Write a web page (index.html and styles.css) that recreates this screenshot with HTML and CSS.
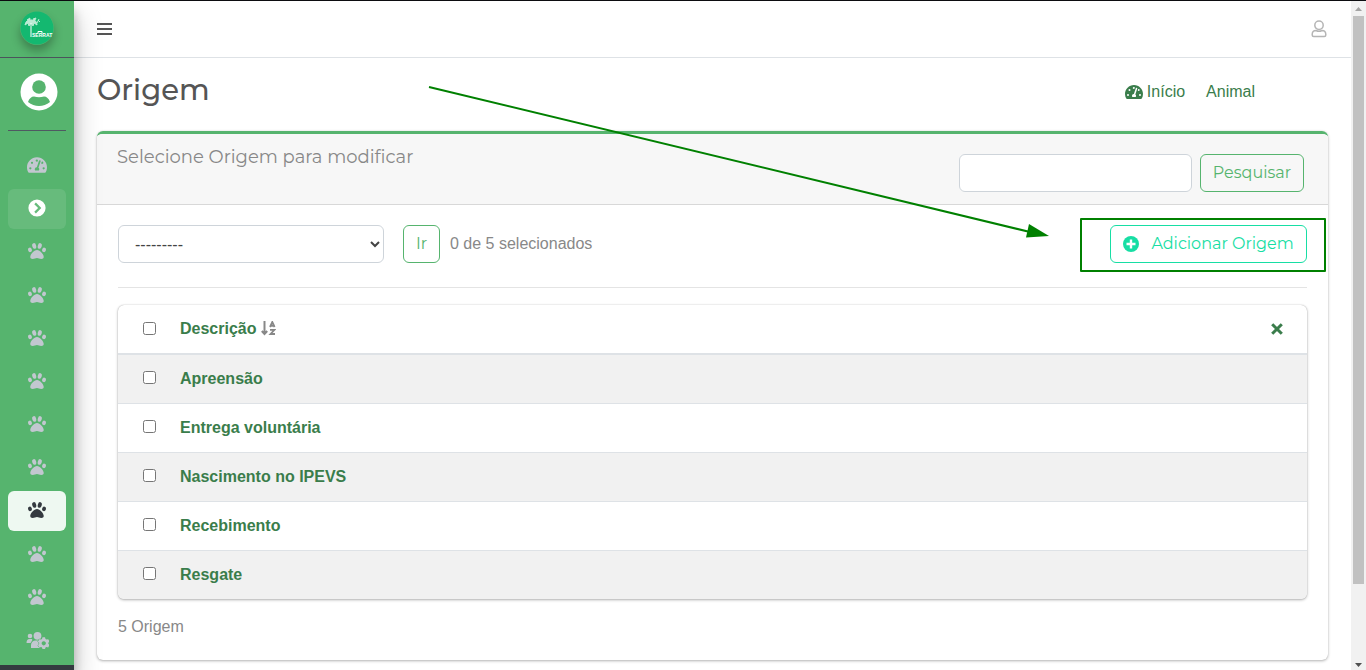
FILE: index.html
```html
<!DOCTYPE html>
<html lang="pt-br">
<head>
<meta charset="utf-8">
<title>Origem</title>
<link rel="stylesheet" href="styles.css">
</head>
<body>
<svg class="defs" aria-hidden="true">
  <symbol id="paw" viewBox="0 0 512 512">
    <path d="M256 224c-79.4 0-192 122.8-192 200.3 0 34.9 26.8 55.7 71.7 55.7 48.9 0 81.1-25 120.3-25 39.500 0 71.800 25 120.300 25 44.900 0 71.700-20.800 71.700-55.700C448 346.800 335.400 224 256 224z"/>
    <ellipse cx="56" cy="224" rx="53" ry="65" transform="rotate(-16 56 224)"/>
    <ellipse cx="456" cy="224" rx="53" ry="65" transform="rotate(16 456 224)"/>
    <ellipse cx="177" cy="112" rx="56" ry="82" transform="rotate(-15 177 112)"/>
    <ellipse cx="335" cy="112" rx="56" ry="82" transform="rotate(15 335 112)"/>
  </symbol>
  <symbol id="gauge" viewBox="0 0 576 512">
    <path fill-rule="evenodd" d="M288 32C129 32 0 161 0 320c0 53 14 102 39 145 6 9 16 15 27 15h444c11 0 21-6 27-15 25-43 39-92 39-145C576 161 447 32 288 32zM288 96a32 32 0 0 1 29 20l-9 29a32 32 0 1 1-20-49zM96 384a32 32 0 1 1 0-64 32 32 0 0 1 0 64zM144 224a32 32 0 1 1 0-64 32 32 0 0 1 0 64zM391 152l-61 184c30 20 30 55 13 80H233c-23-39-3-96 51-96l61-183c10-30 56-16 46 15zM408 202l16-39a32 32 0 1 1-16 39zM480 384a32 32 0 1 1 0-64 32 32 0 0 1 0 64z"/>
  </symbol>
</svg>
<div class="app">
  <aside class="sidebar">
    <a class="brand" href="#" aria-label="Início">
      <svg class="logo" viewBox="0 0 34 34" aria-hidden="true">
        <circle class="logo-disc" cx="17" cy="17" r="16.500"/>
        <path class="logo-art" d="M5 14Q6 8 12 9Q17 9 17 14L14 12L13 15L11 12L9 15L8 12ZM7 9L10 7L9 10M13 8L16 7L14 11M18 9L20 11M19 8L17 12"/>
        <path class="logo-line" d="M11 12V26M18 22V20.500H22V22"/>
        <text class="logo-text" x="12" y="26">SERRAT</text>
      </svg>
    </a>
    <div class="user-panel">
      <a href="#" aria-label="Usuário">
        <svg class="avatar" viewBox="0 0 38 38" aria-hidden="true"><circle class="av-bg" cx="19" cy="19" r="18.500"/><circle class="av-fg" cx="19" cy="14" r="6.800"/><path class="av-fg" d="M8 29Q10 23.500 14 23.500Q19 25 24 23.500Q28 23.500 30 29Q25 33 19 33T8 29Z"/></svg>
      </a>
    </div>
    <nav class="side-nav" aria-label="Menu lateral">
      <a class="side-link" href="#" aria-label="Painel"><svg class="gauge"><use href="#gauge"/></svg></a>
      <a class="side-link open" href="#" aria-label="Animal"><svg class="paw" viewBox="0 0 18 18"><path fill-rule="evenodd" d="M9 .4a8.600 8.600 0 1 0 0 17.200A8.600 8.600 0 1 0 9 .4zM6.300 5.200L7.900 3.600L13.300 9L7.900 14.400L6.300 12.800L10.100 9z"/></svg></a>
      <a class="side-link" href="#" aria-label="Item 1"><svg class="paw"><use href="#paw"/></svg></a>
      <a class="side-link" href="#" aria-label="Item 2"><svg class="paw"><use href="#paw"/></svg></a>
      <a class="side-link" href="#" aria-label="Item 3"><svg class="paw"><use href="#paw"/></svg></a>
      <a class="side-link" href="#" aria-label="Item 4"><svg class="paw"><use href="#paw"/></svg></a>
      <a class="side-link" href="#" aria-label="Item 5"><svg class="paw"><use href="#paw"/></svg></a>
      <a class="side-link" href="#" aria-label="Item 6"><svg class="paw"><use href="#paw"/></svg></a>
      <a class="side-link active" href="#" aria-label="Origem" aria-current="page"><svg class="paw"><use href="#paw"/></svg></a>
      <a class="side-link" href="#" aria-label="Item 7"><svg class="paw"><use href="#paw"/></svg></a>
      <a class="side-link" href="#" aria-label="Item 8"><svg class="paw"><use href="#paw"/></svg></a>
      <a class="side-link" href="#" aria-label="Autenticação"><svg class="users" viewBox="0 0 22 18"><circle cx="3.500" cy="5" r="2.300"/><circle cx="11" cy="4.800" r="3.900"/><path d="M0 12Q0 8 3 8H5.500Q6.500 8.500 5 10.500L4 12ZM4.500 17V14Q5 9.500 9 9.500H13Q11.500 12 12.500 14.500L14 17Z"/><path class="cog" fill-rule="evenodd" d="M16 6.300h2.500l.5 1.700 1 .6 1.700-.4 1.300 2.300-1.200 1.300v1l1.200 1.300-1.300 2.300-1.700-.4-1 .6-.5 1.500H16l-.5-1.500-1-.6-1.700.4-1.300-2.300 1.200-1.300v-1l-1.200-1.300 1.300-2.300 1.700.4 1-.6zM17.200 10.200a2.100 2.100 0 1 0 .1 0z"/></svg></a>
    </nav>
  </aside>

  <div class="page">
    <header class="topbar">
      <button class="icon-btn" type="button" aria-label="Alternar menu"><svg class="bars" viewBox="0 0 15 14"><path d="M0 2H15M0 7H15M0 12H15"/></svg></button>
      <button class="icon-btn" type="button" aria-label="Conta"><svg class="person" viewBox="0 0 16 18"><circle cx="8" cy="5.200" r="4.200"/><path d="M5 10.500Q8 12 11 10.500Q14.800 10.500 14.800 14.500V15Q14.800 16.500 13.300 16.500H2.700Q1.200 16.500 1.200 15V14.500Q1.200 10.500 5 10.500Z"/></svg></button>
    </header>
    <main class="content">
      <div class="heading">
        <h1>Origem</h1>
        <nav class="crumbs" aria-label="Trilha">
          <a href="#"><svg class="crumb-icon"><use href="#gauge"/></svg>Início</a>
          <a href="#">Animal</a>
        </nav>
      </div>
      <section class="card">
        <div class="card-head">
          <h2>Selecione Origem para modificar</h2>
          <form class="search">
            <input class="field" type="text" aria-label="Pesquisar">
            <button class="btn" type="button">Pesquisar</button>
          </form>
        </div>
        <div class="card-body">
          <div class="actions">
            <select class="field action-select" aria-label="Ação"><option>---------</option></select>
            <button class="btn go" type="button">Ir</button>
            <span>0 de 5 selecionados</span>
            <a class="btn add" href="#"><svg class="plus" viewBox="0 0 16 16"><circle cx="8" cy="8" r="8"/><path d="M8 3.500V12.500M3.500 8H12.500"/></svg>Adicionar Origem</a>
          </div>
          <div class="table-wrap">
            <table>
              <thead>
                <tr>
                  <th class="check"><input type="checkbox" aria-label="Selecionar todos"></th>
                  <th><a href="#">Descrição</a> <svg class="sort" viewBox="0 0 15 15"><path d="M3.500 0V12M.8 10L3.500 13L6.200 10"/><path class="az" d="M9 6L11.300 1L13.600 6M9.800 4.800H12.800M9 8.800H13.500L9.500 13H14"/></svg></th>
                  <th class="clear"><a href="#" aria-label="Remover ordenação"><svg class="times" viewBox="0 0 12 12"><path d="M1.200 1.200L10.800 10.800M10.800 1.200L1.200 10.800"/></svg></a></th>
                </tr>
              </thead>
              <tbody>
                <tr><td class="check"><input type="checkbox" aria-label="Apreensão"></td><th colspan="2"><a href="#">Apreensão</a></th></tr>
                <tr><td class="check"><input type="checkbox" aria-label="Entrega voluntária"></td><th colspan="2"><a href="#">Entrega voluntária</a></th></tr>
                <tr><td class="check"><input type="checkbox" aria-label="Nascimento no IPEVS"></td><th colspan="2"><a href="#">Nascimento no IPEVS</a></th></tr>
                <tr><td class="check"><input type="checkbox" aria-label="Recebimento"></td><th colspan="2"><a href="#">Recebimento</a></th></tr>
                <tr><td class="check"><input type="checkbox" aria-label="Resgate"></td><th colspan="2"><a href="#">Resgate</a></th></tr>
              </tbody>
            </table>
          </div>
          <p class="total">5 Origem</p>
        </div>
      </section>
    </main>
  </div>

  <div class="scrollbar" aria-hidden="true">
    <svg class="tri" viewBox="0 0 7 4"><path d="M0 4L3.500 0L7 4Z"/></svg>
    <div class="track"><div class="thumb"></div></div>
    <svg class="tri down" viewBox="0 0 7 4"><path d="M0 0L3.500 4L7 0Z"/></svg>
  </div>
</div>
<svg class="arrow" viewBox="0 0 622 152" aria-hidden="true"><path class="shaft" d="M1 1L602 146"/><path d="M621 150L598 151.500L601 138Z"/></svg>
<div class="highlight"></div>
</body>
</html>
```
FILE: styles.css
```css
* { box-sizing: border-box; }
body {
  margin: 0;
  color: #888;
  background: #fff;
  font: 16px/24px "Liberation Sans", Arial, sans-serif;
  overflow: hidden;
}
a { color: #3a7d4b; text-decoration: none; }
button { font: inherit; cursor: pointer; }
svg { fill: currentColor; flex: none; }
.defs { position: absolute; width: 0; height: 0; }
.app { display: flex; height: 100vh; border-top: 1px solid #0c0c10; }

.sidebar {
  display: flex;
  flex-direction: column;
  flex: none;
  width: 74px;
  background: #56b46e;
  border-bottom: 5px solid #343a40;
  box-shadow: 0 14px 28px rgba(0,0,0,.25), 0 10px 10px rgba(0,0,0,.22);
  z-index: 1;
}
.brand {
  display: flex;
  justify-content: center;
  height: 57px;
  padding-top: 10px;
  border-bottom: 1px solid #4b545c;
}
.logo { width: 34px; height: 34px; overflow: visible; border-radius: 50%; box-shadow: 0 6px 10px rgba(0,0,0,.28); }
.logo-disc { fill: #14b870; }
.logo-art { fill: #e6f8ee; stroke: #e6f8ee; stroke-width: 1; opacity: .8; }
.logo-line { fill: none; stroke: #fff; stroke-width: 1; }
.logo-text { fill: #fff; font: bold 5px "Liberation Sans", sans-serif; }
.user-panel { margin: 0 8px 15px; padding: 15px 0 19px; border-bottom: 1px solid #4f5962; }
.user-panel a { display: flex; justify-content: center; padding-left: 4px; }
.avatar { width: 38px; height: 38px; }
.av-bg { fill: #fff; }
.av-fg { fill: #56b46e; }
.side-nav { display: flex; flex: 1; flex-direction: column; justify-content: space-between; padding: 0 8px 4px; }
.side-link {
  display: flex;
  align-items: center;
  justify-content: center;
  height: 40px;
  padding-bottom: 2px;
  color: #c2c7d0;
  border-radius: 6px;
}
.side-link.open { color: #fff; background: rgba(255,255,255,.1); }
.side-link.active { color: #343a40; background: rgba(255,255,255,.9); }
.paw { width: 18px; height: 18px; }
.gauge { width: 20px; height: 18px; }
.users { width: 23px; height: 18px; }
.cog { stroke: #56b46e; stroke-width: 1; paint-order: stroke; }

.page { flex: 1; min-width: 0; }
.topbar {
  display: flex;
  align-items: center;
  justify-content: space-between;
  height: 57px;
  padding: 0 24px 0 23px;
  border-bottom: 1px solid #dee2e6;
}
.icon-btn { display: flex; padding: 0; border: 0; background: none; color: #555; }
.bars { width: 15px; height: 14px; padding-bottom: 0; stroke: #555; stroke-width: 2; }
.person { width: 16px; height: 18px; fill: none; stroke: #b5b5b5; stroke-width: 1.500; }
.content { padding: 15px 23px 0; }
.heading { display: flex; justify-content: space-between; height: 58px; padding-right: 73px; }
h1, h2, .btn { font-family: Montserrat, Inter, "Open Sans", sans-serif; }
h1 { margin: 0; color: #555; font-size: 29px; font-weight: 500; line-height: 34px; }
.crumbs { display: flex; gap: 21px; padding-top: 7px; }
.crumbs a { display: flex; align-items: center; gap: 4px; height: 24px; }
.crumb-icon { width: 18px; height: 16px; }

.card {
  border-top: 3px solid #56b46e;
  border-radius: 6px;
  box-shadow: 0 0 1px rgba(0,0,0,.13), 0 1px 3px rgba(0,0,0,.3);
  overflow: hidden;
}
.card-head {
  display: flex;
  align-items: flex-start;
  justify-content: space-between;
  height: 71px;
  padding: 12px 24px 0 20px;
  background: #f7f7f7;
  border-bottom: 1px solid #d8d8d8;
}
h2 { margin: 0; font-size: 18px; font-weight: 400; line-height: 22px; }
.search { display: flex; gap: 8px; padding-top: 8px; }
.field { width: 233px; height: 38px; border: 1px solid #ced4da; border-radius: 6px; background: #fff; color: #444; }
.btn {
  display: inline-flex;
  align-items: center;
  justify-content: center;
  width: 104px;
  height: 38px;
  padding: 0;
  border: 1px solid #56b46e;
  border-radius: 6px;
  background: none;
  color: #56b46e;
  font-size: 16px;
  font-weight: 400;
}
.card-body { padding: 20px 21px 21px; }
.actions { display: flex; align-items: center; padding-bottom: 24px; border-bottom: 1px solid #e4e4e4; }
.action-select { width: 266px; padding: 0 0 0 12px; font: 16px "Liberation Sans", sans-serif; }
.go { width: 37px; margin: 0 10px 0 19px; }
.add { width: 197px; margin-left: auto; gap: 12px; color: #17dea4; border-color: #17dea4; }
.plus { width: 16px; height: 16px; }
.plus path { stroke: #fff; stroke-width: 2.400; }

.table-wrap {
  margin-top: 17px;
  border-radius: 6px;
  box-shadow: 0 0 1px rgba(0,0,0,.3), 0 1px 3px rgba(0,0,0,.3);
  overflow: hidden;
}
table { width: 100%; border-collapse: collapse; }
th, td { height: 49px; padding: 0 24px 0 0; text-align: left; border-top: 1px solid #dee2e6; }
thead th { border-top: 0; border-bottom: 2px solid #dee2e6; }
tbody tr:nth-child(odd) { background: #f1f1f1; }
.check { width: 62px; padding: 0 0 2px 25px; }
.check input { display: block; width: 13px; height: 13px; margin: 0; }
.clear a { display: flex; justify-content: flex-end; }
.sort { width: 15px; height: 15px; vertical-align: -2px; fill: none; stroke: #888; stroke-width: 2; }
.az { stroke-width: 1.800; }
.times { width: 12px; height: 12px; stroke: #3a7d4b; stroke-width: 3; }
.total { margin: 16px 0 0; }

.scrollbar {
  display: flex;
  flex: none;
  flex-direction: column;
  align-items: center;
  width: 15px;
  padding: 6px 0 3px;
  background: #f1f1f1;
}
.tri { width: 7px; height: 4px; fill: #a3a3a3; }
.tri.down { fill: #505050; }
.track { flex: 1; width: 11px; padding: 5px 0; }
.thumb { height: 88.5%; background: #c1c1c1; }

/* Annotation over the page */
.arrow { position: absolute; left: 428px; top: 86px; width: 622px; height: 152px; fill: #008000; pointer-events: none; }
.shaft { stroke: #008000; stroke-width: 2; }
.highlight { position: absolute; left: 1080px; top: 218px; width: 246px; height: 54px; border: 2px solid #008000; border-radius: 1px; pointer-events: none; }
```
